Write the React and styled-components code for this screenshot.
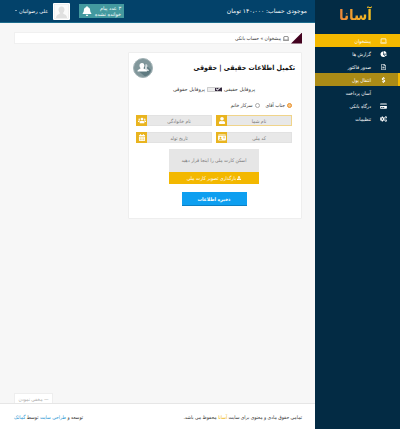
import React, { useState } from 'react'
import styled, { createGlobalStyle, css } from 'styled-components'
import {
  FaBell,
  FaCalendarAlt,
  FaCheck,
  FaCogs,
  FaCreditCard,
  FaDollarSign,
  FaRegFileAlt,
  FaUpload,
  FaUser,
  FaUsers,
} from 'react-icons/fa'
import { FaChartPie, FaIdCard, FaLaptop } from 'react-icons/fa6'

const wideFont = "'DejaVu Sans', sans-serif"

const GlobalStyle = createGlobalStyle`
  * {
    box-sizing: border-box;
  }
  body {
    margin: 0;
    background: #f7f7f7;
    color: #333;
    font: 5px/8px 'DejaVu Sans Condensed', 'DejaVu Sans', sans-serif;
  }
  a {
    color: inherit;
    text-decoration: none;
  }
  button,
  input {
    font: inherit;
    margin: 0;
    padding: 0;
    border: 0;
  }
`

const Page = styled.div`
  display: grid;
  grid-template-columns: 85px minmax(0, 1fr);
  min-height: 100vh;
`

const Sidebar = styled.aside`
  background: #032b44;
  color: white;
`

const Logo = styled.h1`
  margin: 0 28px 0 0;
  height: 34px;
  line-height: 30px;
  font-size: 15px;
  width: fit-content;
  color: transparent;
  background: linear-gradient(to left, #f7c21c, #e9853c);
  background-clip: text;
`

const MenuLink = styled.a`
  display: flex;
  align-items: center;
  gap: 8px;
  height: 13px;
  padding-right: 13px;
  svg {
    width: 7px;
    height: 6px;
  }
  ${(props) =>
    props.$state === 'active' &&
    css`
      background: #f5b900;
    `}
  ${(props) =>
    props.$state === 'hover' &&
    css`
      background: #ab8b16;
      box-shadow: inset -2px 0 #f5b900;
    `}
`

const IconSlot = styled.span`
  display: flex;
  width: 8px;
  justify-content: center;
`

const Content = styled.div`
  display: flex;
  flex-direction: column;
  min-width: 0;
`

const TopBar = styled.header`
  display: flex;
  align-items: center;
  height: 23px;
  padding: 0 8px 0 15px;
  background: #03426a;
  border-bottom: 1px solid #1c6b8c;
  color: white;
  font-family: ${wideFont};
`

const Balance = styled.span`
  margin-left: auto;
  font-size: 6px;
`

const Notice = styled.button`
  display: flex;
  align-items: center;
  justify-content: space-between;
  width: 45px;
  height: 14px;
  padding: 0 3px;
  background: #43999f;
  color: white;
  line-height: 6px;
  text-align: right;
  svg {
    width: 10px;
    height: 10px;
  }
`

const Avatar = styled.div`
  display: flex;
  width: 17px;
  height: 17px;
  margin: 0 9px 0 5px;
  padding: 1px;
  background: white;
  border-radius: 1px;
  svg {
    width: 100%;
    height: 100%;
  }
`

const UserMenu = styled.button`
  display: flex;
  align-items: center;
  gap: 2px;
  background: none;
  color: white;
  &::after {
    content: '';
    border: 1px solid transparent;
    border-top-color: white;
  }
`

const Main = styled.main`
  flex: 1;
  padding: 9px 13px 9px 14px;
`

const Breadcrumb = styled.nav`
  display: flex;
  align-items: center;
  gap: 2px;
  height: 12px;
  background: white;
  border: 1px solid #f0f0f0;
  border-right: 0;
  svg {
    width: 6px;
    height: 5px;
  }
`

const Corner = styled.span`
  width: 11px;
  height: 11px;
  background: #43021f;
  clip-path: polygon(100% 0, 100% 100%, 0 100%);
`

const Card = styled.form`
  width: 174px;
  margin-top: 8px;
  padding: 5px 9px 12px 7px;
  background: white;
  border: 1px solid #eee;
  border-radius: 1px;
`

const CardHeader = styled.div`
  display: flex;
  align-items: center;
  justify-content: space-between;
  margin: 0 -3px;
  h2 {
    margin: 0;
    font-size: 7px;
    line-height: 12px;
    color: #111;
  }
  svg {
    width: 20px;
    height: 20px;
  }
`

const ProfileSwitch = styled.div`
  display: flex;
  align-items: center;
  justify-content: center;
  gap: 2px;
  margin-top: 7px;
  font-family: ${wideFont};
`

const Track = styled.span`
  display: grid;
  align-items: center;
  > * {
    grid-area: 1 / 1;
  }
  svg {
    width: 4px;
    height: 4px;
    margin-right: 2px;
    color: white;
    pointer-events: none;
  }
`

const Switch = styled.input`
  appearance: none;
  width: 15px;
  height: 5px;
  border: 1px solid #ccc;
  border-radius: 1px;
  background: #eee;
  &:checked {
    border-right-color: #35293f;
    background: linear-gradient(to left, #35293f 50%, #eee 50%) border-box;
  }
`

const RadioRow = styled.div`
  display: flex;
  gap: 6px;
  margin-top: 8px;
`

const RadioLabel = styled.label`
  display: flex;
  align-items: center;
  gap: 2px;
`

const Radio = styled.input`
  appearance: none;
  width: 5px;
  height: 5px;
  border: 1px solid #aaa;
  border-radius: 50%;
  background: white;
  &:checked {
    border-color: #e8912b;
    background: #f6c58a;
  }
`

const Fields = styled.div`
  display: grid;
  grid-template-columns: repeat(2, minmax(0, 1fr));
  gap: 6px 4px;
  margin-top: 6px;
`

const Field = styled.label`
  display: flex;
  height: 11px;
  background: #e8e8e8;
  border: 1px solid ${(props) => (props.$active ? '#f0d48a' : '#e2e2e2')};
  border-left: 0;
`

const FieldInput = styled.input`
  flex: 1;
  min-width: 0;
  background: none;
  text-align: center;
  outline: 0;
  &::placeholder {
    color: #777;
    opacity: 1;
  }
`

const FieldIcon = styled.span`
  display: flex;
  align-items: center;
  justify-content: center;
  width: 11px;
  height: 11px;
  margin-top: -1px;
  background: #e9b41f;
  color: white;
  svg {
    width: 8px;
    height: 7px;
  }
`

const Upload = styled.div`
  width: 90px;
  margin: 6px auto 0;
  background: #e6e6e6;
  color: #777;
  text-align: center;
  p {
    margin: 0;
    height: 23px;
    line-height: 23px;
  }
`

const UploadButton = styled.button`
  display: flex;
  align-items: center;
  justify-content: center;
  gap: 1px;
  width: 100%;
  height: 12px;
  background: #f3b800;
  color: white;
  svg {
    width: 4px;
    height: 4px;
  }
`

const SaveButton = styled.button`
  display: block;
  width: 65px;
  height: 14px;
  margin: 8px auto 0;
  background: #0e9ff0;
  border-bottom: 1px solid #0b7fc4;
  color: white;
  font-weight: bold;
`

const HideButton = styled.button`
  align-self: flex-end;
  width: 39px;
  height: 10px;
  margin-left: 14px;
  background: white;
  border: 1px solid #eee;
  border-bottom: 0;
  color: #aaa;
`

const Footer = styled.footer`
  display: flex;
  align-items: center;
  justify-content: space-between;
  height: 26px;
  padding: 0 13px 0 14px;
  background: white;
  border-top: 1px solid #e6e6e6;
  p {
    margin: 0;
  }
`

const FooterLink = styled.a`
  color: ${(props) => props.$color};
`

const menu = [
  { label: 'پیشخوان', icon: FaLaptop, state: 'active' },
  { label: 'گزارش ها', icon: FaChartPie },
  { label: 'صدور فاکتور', icon: FaRegFileAlt },
  { label: 'انتقال پول', icon: FaDollarSign, state: 'hover' },
  { label: 'آسان پرداخت' },
  { label: 'درگاه بانکی', icon: FaCreditCard },
  { label: 'تنظیمات', icon: FaCogs },
]

const fields = [
  { name: 'firstName', label: 'نام شما', icon: FaUser, active: true },
  { name: 'lastName', label: 'نام خانوادگی', icon: FaUsers },
  { name: 'nationalId', label: 'کد ملی', icon: FaIdCard },
  { name: 'birthday', label: 'تاریخ تولد', icon: FaCalendarAlt },
]

// flat badge: two people with a long shadow to the bottom right
const PeopleBadge = () => (
  <svg viewBox="0 0 40 40" aria-hidden="true">
    <circle cx="20" cy="20" r="19" fill="#81979b" stroke="#a3b2b5" strokeWidth="2" />
    <path d="M23 11 L36 24 A17 17 0 0 1 24 37 L11 26 Z" fill="#5f7a80" />
    <path
      d="M25 12a4 4 0 0 1 4 4c0 2-1 3-1.500 4 0 2 4.500 2 4.500 6h-9z"
      fill="#d5dddf"
    />
    <path
      d="M18 10c3 0 5 2 5 5 0 2-1 4-2 5 0 3 7 2 7 7H9c0-5 6-4 6-7-1-1-2-3-2-5 0-3 2-5 5-5z"
      fill="#fff"
    />
  </svg>
)

const Portrait = () => (
  <svg viewBox="0 0 30 30" aria-hidden="true">
    <rect x="1" y="1" width="28" height="28" fill="#fafafa" stroke="#e4e4e4" />
    <path
      d="M15 5c4 0 6 3 6 6s-2 6-3 7c0 3 8 2 8 10H4c0-8 8-7 8-10-1-1-3-4-3-7s2-6 6-6z"
      fill="#e0e0e0"
    />
  </svg>
)

const ProfileForm = () => {
  const [real, setReal] = useState(true)
  const [gender, setGender] = useState('male')
  return (
    <Card onSubmit={(e) => e.preventDefault()}>
      <CardHeader>
        <h2>تکمیل اطلاعات حقیقی | حقوقی</h2>
        <PeopleBadge />
      </CardHeader>
      <ProfileSwitch>
        <label htmlFor="profile">پروفایل حقیقی</label>
        <Track>
          <Switch
            id="profile"
            type="checkbox"
            checked={real}
            onChange={() => setReal(!real)}
          />
          {real && <FaCheck />}
        </Track>
        <label htmlFor="profile">پروفایل حقوقی</label>
      </ProfileSwitch>
      <RadioRow>
        <RadioLabel>
          <Radio
            type="radio"
            name="gender"
            checked={gender === 'male'}
            onChange={() => setGender('male')}
          />
          جناب آقای
        </RadioLabel>
        <RadioLabel>
          <Radio
            type="radio"
            name="gender"
            checked={gender === 'female'}
            onChange={() => setGender('female')}
          />
          سرکار خانم
        </RadioLabel>
      </RadioRow>
      <Fields>
        {fields.map(({ name, label, icon: Icon, active }) => (
          <Field key={name} $active={active}>
            <FieldInput name={name} placeholder={label} aria-label={label} />
            <FieldIcon>
              <Icon />
            </FieldIcon>
          </Field>
        ))}
      </Fields>
      <Upload>
        <p>اسکن کارت ملی را اینجا قرار دهید</p>
        <UploadButton type="button">
          <FaUpload />
          بارگذاری تصویر کارت ملی
        </UploadButton>
      </Upload>
      <SaveButton type="submit">ذخیره اطلاعات</SaveButton>
    </Card>
  )
}

const App = () => (
  <>
    <GlobalStyle />
    <Page dir="rtl">
      <Sidebar>
        <Logo>آسانا</Logo>
        <nav>
          {menu.map(({ label, icon: Icon, state }) => (
            <MenuLink key={label} href="#" $state={state}>
              <IconSlot>{Icon && <Icon />}</IconSlot>
              {label}
            </MenuLink>
          ))}
        </nav>
      </Sidebar>
      <Content>
        <TopBar>
          <Balance>موجودی حساب: ۱۴۰،۰۰۰ تومان</Balance>
          <Notice>
            <span>
              ۳ عدد پیام
              <br />
              خوانده نشده
            </span>
            <FaBell />
          </Notice>
          <Avatar>
            <Portrait />
          </Avatar>
          <UserMenu>علی رضوانیان</UserMenu>
        </TopBar>
        <Main>
          <Breadcrumb>
            <Corner />
            <FaLaptop />
            <span>
              <a href="#">پیشخوان</a> » حساب بانکی
            </span>
          </Breadcrumb>
          <ProfileForm />
        </Main>
        <HideButton>— مخفی نمودن</HideButton>
        <Footer>
          <p>
            تمامی حقوق مادی و معنوی برای سایت{' '}
            <FooterLink href="#" $color="#f0b400">
              آسانا
            </FooterLink>{' '}
            محفوظ می باشد.
          </p>
          <p>
            توسعه و{' '}
            <FooterLink href="#" $color="#1a94d2">
              طراحی سایت
            </FooterLink>{' '}
            توسط{' '}
            <FooterLink href="#" $color="#1a94d2">
              گماتک
            </FooterLink>
          </p>
        </Footer>
      </Content>
    </Page>
  </>
)

export default App
